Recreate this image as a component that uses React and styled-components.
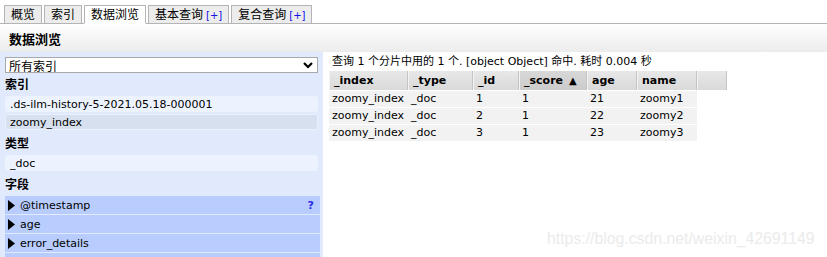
import React from "react";
import styled, { createGlobalStyle } from "styled-components";

const Global = createGlobalStyle`
  html, body { margin: 0; padding: 0; background: #fff; }
  body {
    font-family: "DejaVu Sans", "Noto Sans CJK SC", sans-serif;
    font-size: 11px;
    color: #000;
    width: 827px;
    height: 257px;
    overflow: hidden;
    position: relative;
  }
`;

const TabBar = styled.div`
  display: flex;
  align-items: flex-end;
  gap: 2px;
  height: 24px;
  box-sizing: border-box;
  padding: 0 0 0 4px;
  border-bottom: 1px solid #b4b4b4;
`;

const Tab = styled.div`
  height: 19px;
  box-sizing: border-box;
  padding: 0 6px;
  margin-bottom: -1px;
  border: 1px solid #b4b4b4;
  border-bottom: ${(p) => (p.$active ? "1px solid #fff" : "1px solid #b4b4b4")};
  background: ${(p) => (p.$active ? "#fff" : "#ececec")};
  line-height: 18px;
  font-size: 12px;
  white-space: nowrap;
`;

const Plus = styled.span`
  color: #1010e8;
  margin-left: 3px;
  font-size: 10px;
`;

const Header = styled.div`
  height: 28px;
  box-sizing: border-box;
  padding-left: 9px;
  display: flex;
  align-items: center;
  font-weight: bold;
  font-size: 13px;
  background: linear-gradient(#ffffff, #ececec);
`;

const Body = styled.div`
  display: flex;
  align-items: flex-start;
  height: 205px;
  overflow: hidden;
`;

const Sidebar = styled.div`
  width: 323px;
  flex: none;
  height: 100%;
  overflow: hidden;
  box-sizing: border-box;
  background: #e0eafc;
  padding: 5px 5px 0 5px;
  display: flex;
  flex-direction: column;
`;

const Select = styled.div`
  height: 16px;
  flex: none;
  box-sizing: border-box;
  border: 1px solid #a9a9a9;
  background: #fff;
  display: flex;
  align-items: center;
  justify-content: space-between;
  padding: 0 4px 0 3px;
  font-size: 12px;
`;

const Label = styled.div`
  line-height: 20px;
  height: 20px;
  flex: none;
  margin: 2px 0 1px;
  font-weight: bold;
  font-size: 12px;
`;

const Item = styled.div`
  height: 16px;
  flex: none;
  box-sizing: border-box;
  border-radius: 3px;
  padding-left: 4px;
  margin-bottom: 2px;
  line-height: 15px;
  background: ${(p) => (p.$selected ? "#d6e0ee" : "#edf3fe")};
  border: 1px solid ${(p) => (p.$selected ? "#eaf0fb" : "#edf3fe")};
`;

const Fields = styled.div`
  display: flex;
  flex-direction: column;
  gap: 1px;
  margin-right: -2px;
`;

const Field = styled.div`
  height: 18px;
  flex: none;
  background: #b8cdfd;
  display: flex;
  align-items: center;
  padding: 0 6px 0 3px;
  gap: 5px;
`;

const FieldName = styled.span`
  flex: 1;
`;

const Help = styled.span`
  color: #2a2aee;
  font-weight: bold;
  font-size: 11px;
`;

const Main = styled.div`
  flex: 1;
  padding: 2px 0 0 6px;
`;

const Status = styled.div`
  height: 17px;
  line-height: 16px;
  padding-left: 3px;
`;

const HeadRow = styled.div`
  display: grid;
  grid-template-columns: 79px 65px 46px 68px 50px 60px 30px;
  height: 19px;
  width: max-content;
`;

const HeadCell = styled.div`
  box-sizing: border-box;
  height: 19px;
  padding-left: 4px;
  line-height: 19px;
  font-weight: bold;
  white-space: nowrap;
  border-right: 1px solid #c4c4c4;
  border-left: 1px solid #f4f4f4;
  background: ${(p) =>
    p.$sorted
      ? "linear-gradient(#d8d8d8, #cbcbcb)"
      : "linear-gradient(#e8e8e8, #d9d9d9)"};
`;

const SortMark = styled.span`
  margin-left: 6px;
  font-size: 10px;
`;

const Row = styled.div`
  display: grid;
  grid-template-columns: 79px 65px 46px 68px 50px 60px;
  height: 16px;
  margin-top: 1px;
  width: max-content;
  background: #f2f2f2;
`;

const Cell = styled.div`
  padding-left: 3px;
  line-height: 16px;
  white-space: nowrap;
  overflow: hidden;
`;

const Watermark = styled.div`
  position: absolute;
  left: 547px;
  top: 230px;
  font-family: "Liberation Sans", Arial, sans-serif;
  font-size: 15.8px;
  color: #ebebeb;
  white-space: nowrap;
`;

const Chevron = () => (
  <svg width="10" height="8" viewBox="0 0 10 8">
    <path d="M1 2 L5 6 L9 2" stroke="#000" strokeWidth="2.2" fill="none" />
  </svg>
);

const Triangle = () => (
  <svg width="7" height="11" viewBox="0 0 7 11">
    <path d="M0 0 L7 5.5 L0 11 Z" fill="#000" />
  </svg>
);

const rows = [
  ["zoomy_index", "_doc", "1", "1", "21", "zoomy1"],
  ["zoomy_index", "_doc", "2", "1", "22", "zoomy2"],
  ["zoomy_index", "_doc", "3", "1", "23", "zoomy3"],
];

export default function App() {
  return (
    <>
      <Global />
      <TabBar>
        <Tab>概览</Tab>
        <Tab>索引</Tab>
        <Tab $active>数据浏览</Tab>
        <Tab>
          基本查询<Plus>[+]</Plus>
        </Tab>
        <Tab>
          复合查询<Plus>[+]</Plus>
        </Tab>
      </TabBar>
      <Header>数据浏览</Header>
      <Body>
        <Sidebar>
          <Select>
            <span>所有索引</span>
            <Chevron />
          </Select>
          <Label>索引</Label>
          <Item>.ds-ilm-history-5-2021.05.18-000001</Item>
          <Item $selected>zoomy_index</Item>
          <Label>类型</Label>
          <Item>_doc</Item>
          <Label>字段</Label>
          <Fields>
            <Field>
              <Triangle />
              <FieldName>@timestamp</FieldName>
              <Help>?</Help>
            </Field>
            <Field>
              <Triangle />
              <FieldName>age</FieldName>
            </Field>
            <Field>
              <Triangle />
              <FieldName>error_details</FieldName>
            </Field>
            <Field>
              <Triangle />
            </Field>
          </Fields>
        </Sidebar>
        <Main>
          <Status>查询 1 个分片中用的 1 个. [object Object] 命中. 耗时 0.004 秒</Status>
          <HeadRow>
            <HeadCell>_index</HeadCell>
            <HeadCell>_type</HeadCell>
            <HeadCell>_id</HeadCell>
            <HeadCell $sorted>
              _score<SortMark>▲</SortMark>
            </HeadCell>
            <HeadCell>age</HeadCell>
            <HeadCell>name</HeadCell>
            <HeadCell />
          </HeadRow>
          {rows.map((r, i) => (
            <Row key={i}>
              {r.map((c, j) => (
                <Cell key={j}>{c}</Cell>
              ))}
            </Row>
          ))}
        </Main>
      </Body>
      <Watermark>https://blog.csdn.net/weixin_42691149</Watermark>
    </>
  );
}
